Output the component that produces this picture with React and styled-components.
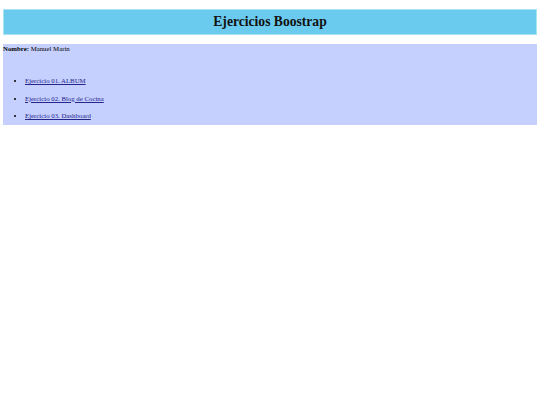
import React from 'react';
import styled, { createGlobalStyle } from 'styled-components';

const GlobalStyle = createGlobalStyle`
  body {
    margin: 0;
    padding: 9px 3px;
    background: #fff;
    font-family: "Liberation Serif", "Times New Roman", serif;
    font-size: 6.8px;
    color: #000;
  }
`;

const Header = styled.header`
  background-color: #6bcbee;
  border: 1px solid #a6e3f5;
  height: 24px;
  display: flex;
  align-items: center;
  justify-content: center;
`;

const Title = styled.h1`
  margin: 0;
  font-size: 13.6px;
  font-weight: bold;
  color: #111;
`;

const Panel = styled.section`
  margin-top: 9px;
  background-color: #c5d0fe;
  height: 81px;
  padding-top: 1px;
  box-sizing: border-box;
`;

const Name = styled.p`
  margin: 0;
  line-height: 8px;
`;

const List = styled.ul`
  margin: 24px 0 0;
  padding-left: 22px;
  list-style: disc;
`;

const Item = styled.li`
  line-height: 8px;
  margin-bottom: 9.5px;
  &::marker {
    font-size: 8px;
  }
`;

const Link = styled.a`
  color: #24248a;
  text-decoration: underline;
`;

const ejercicios = [
  'Ejercicio 01. ALBUM',
  'Ejercicio 02. Blog de Cocina',
  'Ejercicio 03. Dashboard',
];

const App = () => (
  <>
    <GlobalStyle />
    <Header>
      <Title>Ejercicios Boostrap</Title>
    </Header>
    <Panel>
      <Name><b>Nombre:</b> Manuel Marin</Name>
      <List>
        {ejercicios.map((e) => (
          <Item key={e}><Link href="#">{e}</Link></Item>
        ))}
      </List>
    </Panel>
  </>
);

export default App;
